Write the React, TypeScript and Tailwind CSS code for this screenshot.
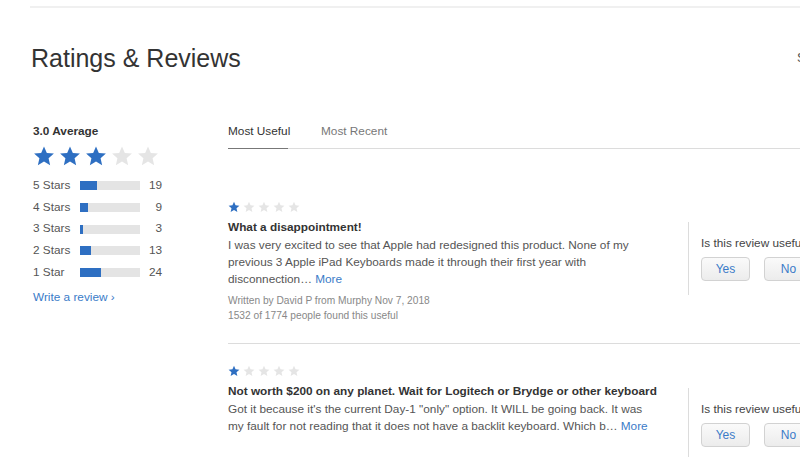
const BLUE = '#2e6fc2';

function Star({ size, filled }: { size: number; filled: boolean }) {
  return (
    <svg width={size} height={size} viewBox="0 0 24 24" className="shrink-0">
      <path
        d="M12 1.5l3.1 7.1 7.7.7-5.8 5.1 1.7 7.6L12 18l-6.7 4 1.7-7.6-5.8-5.1 7.7-.7z"
        fill={filled ? BLUE : '#e5e5e5'}
      />
    </svg>
  );
}

const dist = [
  { label: '5 Stars', count: 19 },
  { label: '4 Stars', count: 9 },
  { label: '3 Stars', count: 3 },
  { label: '2 Stars', count: 13 },
  { label: '1 Star', count: 24 }
];
const total = dist.reduce((a, d) => a + d.count, 0);

const reviews = [
  {
    title: 'What a disappointment!',
    body: (
      <>
        I was very excited to see that Apple had redesigned this product. None of my previous 3 Apple iPad
        Keyboards made it through their first year with disconnection…
      </>
    ),
    meta: ['Written by David P from Murphy Nov 7, 2018', '1532 of 1774 people found this useful']
  },
  {
    title: 'Not worth $200 on any planet. Wait for Logitech or Brydge or other keyboard',
    body: (
      <>
        Got it because it's the current Day-1 "only" option. It WILL be going back. It was my fault for not
        reading that it does not have a backlit keyboard. Which b…
      </>
    ),
    meta: []
  }
];

function Review({ r, first }: { r: (typeof reviews)[number]; first: boolean }) {
  return (
    <div className={`flex ${first ? 'pt-[52px] pb-[20px] border-b border-[#dcdcdc]' : 'pt-[21px]'}`}>
      <div className="w-[460px] shrink-0">
        <div className="flex gap-[3px]">
          {[0, 1, 2, 3, 4].map(i => (
            <Star key={i} size={12} filled={i === 0} />
          ))}
        </div>
        <div className="mt-[6px] text-[11.8px] leading-[16px] font-bold text-[#333] whitespace-nowrap">
          {r.title}
        </div>
        <div className="mt-[2px] text-[11.8px] leading-[17px] text-[#555] pr-[32px]">
          {r.body} <span className="text-[#3a7bc8]">More</span>
        </div>
        {r.meta.length > 0 && (
          <div className="mt-[5px] text-[10.2px] leading-[15px] text-[#888]">
            {r.meta.map(m => (
              <div key={m}>{m}</div>
            ))}
          </div>
        )}
      </div>
      <div className={`border-l border-[#dcdcdc] pl-[12px] ${first ? 'mt-[21px] h-[73px]' : 'mt-[23px] h-[80px]'}`}>
        <div className="mt-[14px] text-[11.8px] leading-[14px] text-[#444] whitespace-nowrap">
          Is this review useful?
        </div>
        <div className="mt-[7px] flex gap-[14px]">
          {['Yes', 'No'].map(b => (
            <button
              key={b}
              className="w-[49px] h-[24px] rounded-[4px] border border-[#d2d2d2] bg-gradient-to-b from-[#fafafa] to-[#ececec] text-[12px] text-[#3a7bc8] shrink-0"
            >
              {b}
            </button>
          ))}
        </div>
      </div>
    </div>
  );
}

export default function App() {
  return (
    <div
      className="w-[800px] h-[457px] overflow-hidden bg-white relative"
      style={{ fontFamily: '"Liberation Sans", Arial, sans-serif' }}
    >
      <div className="ml-[30px] mt-[6px] border-t-2 border-[#f0f0f0]" />
      <div className="flex items-center pl-[31px] mt-[33px] w-[800px] overflow-hidden">
        <h2 className="w-[766px] shrink-0 text-[25px] leading-[34px] text-[#333]">Ratings &amp; Reviews</h2>
        <span className="shrink-0 text-[13px] text-[#555] whitespace-nowrap">See All</span>
      </div>

      <div className="flex mt-[40px]">
        <div className="w-[228px] shrink-0 pl-[33px] pt-[8px]">
          <div className="text-[11.8px] leading-[16px] font-bold text-[#333]">3.0 Average</div>
          <div className="flex gap-[4px] mt-[6px]">
            {[0, 1, 2, 3, 4].map(i => (
              <Star key={i} size={22} filled={i < 3} />
            ))}
          </div>
          <div className="mt-[8px]">
            {dist.map(d => (
              <div key={d.label} className="flex items-center h-[21.7px] text-[11.8px] text-[#555]">
                <div className="w-[47px]">{d.label}</div>
                <div className="w-[60px] h-[9px] bg-[#e4e4e4]">
                  <div className="h-full" style={{ width: `${(d.count / total) * 100}%`, background: BLUE }} />
                </div>
                <div className="w-[22px] text-right">{d.count}</div>
              </div>
            ))}
          </div>
          <div className="mt-[6px] text-[11.8px] text-[#3a7bc8]">Write a review ›</div>
        </div>

        <div className="flex-1 min-w-0">
          <div className="flex border-b border-[#dcdcdc] text-[11.8px] h-[34px]">
            <div className="w-[60px] text-[#333] border-b border-[#777] -mb-px whitespace-nowrap pt-[8px]">
              Most Useful
            </div>
            <div className="ml-[33px] text-[#777] pt-[8px]">Most Recent</div>
          </div>
          {reviews.map((r, i) => (
            <Review key={i} r={r} first={i === 0} />
          ))}
        </div>
      </div>
    </div>
  );
}
